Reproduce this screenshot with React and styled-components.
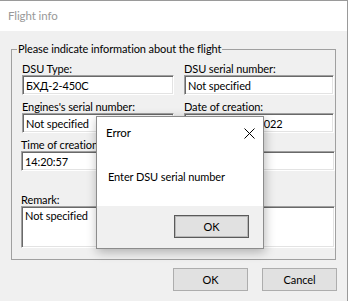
import React from "react";
import styled, { createGlobalStyle } from "styled-components";

const FONT = `Lato, "Noto Sans", sans-serif`;

const Global = createGlobalStyle`
  html, body { margin: 0; padding: 0; background: #f0f0f0; }
  * { box-sizing: border-box; }
`;

const Window = styled.div`
  position: relative;
  width: 348px;
  height: 301px;
  background: #f0f0f0;
  border-top: 1px solid #9a9a9a;
  border-right: 1px solid #9a9a9a;
  display: flex;
  flex-direction: column;
  font-family: ${FONT};
  font-size: 11px;
  letter-spacing: -0.1px;
  color: #000;
  overflow: hidden;
`;

const TitleBar = styled.div`
  height: 30px;
  background: #fff;
  display: flex;
  align-items: center;
  padding-left: 8px;
  line-height: 16px;
  font-size: 11.5px;
  color: #999;
`;

const Content = styled.div`
  padding-top: 10px;
  display: flex;
  flex-direction: column;
`;

const GroupBox = styled.fieldset`
  margin: 0 0 0 11px;
  width: 325px;
  min-width: 0;
  border: 1px solid #a0a0a0;
  padding: 5px 0 11px 10px;
`;

const Legend = styled.legend`
  margin-left: -5px;
  padding: 0 1px;
  line-height: 16px;
`;

const Rows = styled.div`
  display: flex;
  flex-direction: column;
  gap: 5px;
`;

const Row = styled.div`
  display: grid;
  grid-template-columns: 152px 150px;
  column-gap: 10px;
`;

const Field = styled.div`
  display: flex;
  flex-direction: column;
  margin-left: ${(p) => (p.$wide ? "-1px" : "0")};
  margin-top: ${(p) => p.$top || 0}px;
`;

const Label = styled.label`
  line-height: 13px;
  height: 13px;
  white-space: nowrap;
`;

const sunken = `
  background: #fff;
  border-style: solid;
  border-width: 1px;
  border-color: #a0a0a0 #fff #fff #a0a0a0;
  box-shadow: inset 1px 1px 0 #696969, inset -1px -1px 0 #e3e3e3;
  font-family: ${FONT};
  font-size: 11px;
  letter-spacing: -0.1px;
  color: #000;
  outline: none;
  margin: 0;
`;

const TextBox = styled.input`
  ${sunken}
  height: 20px;
  width: 100%;
  padding: 0 3px;
`;

const TextArea = styled.textarea`
  ${sunken}
  height: 42px;
  width: 100%;
  padding: 2px 3px;
  resize: none;
  overflow: hidden;
  line-height: 14px;
`;

const ButtonBar = styled.div`
  display: flex;
  justify-content: flex-end;
  gap: 14px;
  margin-top: 8px;
  padding-right: 10px;
`;

const Button = styled.button`
  width: 75px;
  height: 23px;
  margin: 0;
  padding: 0;
  background: #e1e1e1;
  border: 1px solid ${(p) => (p.$default ? "#5a5a5a" : "#adadad")};
  box-shadow: ${(p) => (p.$default ? "inset 0 0 0 1px #b8b8b8" : "none")};
  font-family: ${FONT};
  font-size: 11px;
  letter-spacing: -0.1px;
  color: #000;
`;

const Dialog = styled.div`
  position: absolute;
  left: 96px;
  top: 115px;
  width: 168px;
  height: 133px;
  background: #fff;
  border: 1px solid #8c8c8c;
  box-shadow: 1px 3px 10px rgba(0, 0, 0, 0.28);
  display: flex;
  flex-direction: column;
`;

const DialogHeader = styled.div`
  display: flex;
  justify-content: space-between;
  align-items: center;
  padding: 8px 8px 0 9px;
  line-height: 16px;
  font-size: 11.5px;
`;

const Message = styled.div`
  margin-top: 28px;
  padding-left: 11px;
  line-height: 16px;
`;

const DialogFooter = styled.div`
  margin-top: auto;
  height: 42px;
  background: #f0f0f0;
  display: flex;
  justify-content: flex-end;
  padding: 9px 14px 0 0;
`;

const CloseIcon = () => (
  <svg width="11" height="11" viewBox="0 0 11 11">
    <path d="M0.5 0.5 L10.5 10.5 M10.5 0.5 L0.5 10.5" stroke="#000" strokeWidth="1" />
  </svg>
);

export default function App() {
  return (
    <>
      <Global />
      <Window>
        <TitleBar>Flight info</TitleBar>
        <Content>
          <GroupBox>
            <Legend>Please indicate information about the flight</Legend>
            <Rows>
              <Row>
                <Field>
                  <Label>DSU Type:</Label>
                  <TextBox defaultValue="БХД-2-450С" readOnly />
                </Field>
                <Field>
                  <Label>DSU serial number:</Label>
                  <TextBox defaultValue="Not specified" readOnly />
                </Field>
              </Row>
              <Row>
                <Field>
                  <Label>Engines's serial number:</Label>
                  <TextBox defaultValue="Not specified" readOnly />
                </Field>
                <Field>
                  <Label>Date of creation:</Label>
                  <TextBox defaultValue="15 September 2022" readOnly />
                </Field>
              </Row>
              <Field $wide>
                <Label>Time of creation:</Label>
                <TextBox defaultValue="14:20:57" readOnly />
              </Field>
              <Field $wide $top={17}>
                <Label>Remark:</Label>
                <TextArea defaultValue="Not specified" readOnly />
              </Field>
            </Rows>
          </GroupBox>
          <ButtonBar>
            <Button>OK</Button>
            <Button>Cancel</Button>
          </ButtonBar>
        </Content>
        <Dialog>
          <DialogHeader>
            <span>Error</span>
            <CloseIcon />
          </DialogHeader>
          <Message>Enter DSU serial number</Message>
          <DialogFooter>
            <Button $default>OK</Button>
          </DialogFooter>
        </Dialog>
      </Window>
    </>
  );
}
